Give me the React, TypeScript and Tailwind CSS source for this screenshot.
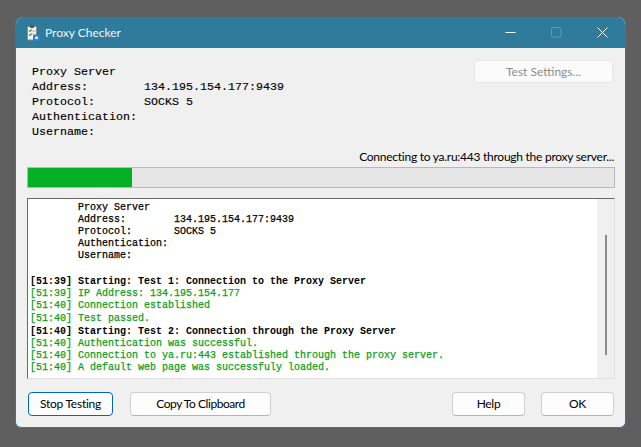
const mono = "font-['Liberation_Mono',monospace]";

function ClipIcon() {
  return (
    <svg width="13" height="16" viewBox="0 0 13 16" className="mr-[5px] shrink-0">
      <rect x="0.5" y="1.5" width="9" height="13.5" rx="1" fill="#f4f4f0" stroke="#8d8d85" strokeWidth="1" />
      <rect x="3" y="0" width="4" height="3" fill="#55554f" />
      <path d="M2 5.5l1 1 2-2M2 9.5l1 1 2-2" stroke="#3aa845" strokeWidth="1.1" fill="none" />
      <path d="M5.5 6h3M5.5 9h2" stroke="#a5a5a5" strokeWidth="1" />
      <rect x="6" y="9.5" width="7" height="6.5" rx="1.5" fill="#2f7fd0" />
      <circle cx="9.5" cy="12.7" r="1.5" fill="#e8f2fc" />
    </svg>
  );
}

function Btn({ label, w, primary, track }: { label: string; w: string; primary?: boolean; track: string }) {
  return (
    <button
      className={`${w} ${track} h-[24px] rounded-[4px] border bg-[#fdfdfd] text-[12px] text-black ${
        primary ? "border-[#0067c0]" : "border-[#d0d0d0] border-b-[#b5b5b5]"
      }`}
    >
      {label}
    </button>
  );
}

const summary = [
  ["Proxy Server", ""],
  ["Address:", "134.195.154.177:9439"],
  ["Protocol:", "SOCKS 5"],
  ["Authentication:", ""],
  ["Username:", ""],
];

const green = "text-[#0aa01c] [-webkit-text-stroke:0.25px]";
const black = "text-black font-bold";

type Line = { t: string; text: string; c: string; h: string };
const log: Line[] = [
  { t: "[51:39]", text: "Starting: Test 1: Connection to the Proxy Server", c: black, h: "h-[12px]" },
  { t: "[51:39]", text: "IP Address: 134.195.154.177", c: green, h: "h-[12px]" },
  { t: "[51:40]", text: "Connection established", c: green, h: "h-[13px]" },
  { t: "[51:40]", text: "Test passed.", c: green, h: "h-[13px]" },
  { t: "[51:40]", text: "Starting: Test 2: Connection through the Proxy Server", c: black, h: "h-[12px]" },
  { t: "[51:40]", text: "Authentication was successful.", c: green, h: "h-[12px]" },
  { t: "[51:40]", text: "Connection to ya.ru:443 established through the proxy server.", c: green, h: "h-[12px]" },
  { t: "[51:40]", text: "A default web page was successfuly loaded.", c: green, h: "h-[12px]" },
];

export default function App() {
  return (
    <div className="h-[447px] w-[641px] overflow-hidden bg-[#5f5f5f] pl-[15px] pt-[17px] font-['Lato',sans-serif]">
      <div className="flex h-[411px] w-[611px] flex-col overflow-hidden rounded-t-[8px] rounded-b-[6px] border-x border-b border-[#2e7b9b] bg-[#f0f0f0]">
        <div className="flex h-[31px] shrink-0 items-center bg-[#2e7b9b] pl-[11px] text-white">
          <ClipIcon />
          <span className="text-[12px] text-[#eef5f8]">Proxy Checker</span>
          <div className="ml-auto flex items-center pr-[17px]">
            <svg width="11" height="11" viewBox="0 0 11 11" className="mr-[35px]">
              <path d="M0.5 5.5h10" stroke="#fff" strokeWidth="1" />
            </svg>
            <svg width="11" height="11" viewBox="0 0 11 11" className="mr-[35px]">
              <rect x="0.5" y="0.5" width="9.5" height="9.5" rx="1" fill="none" stroke="#5c9ab3" strokeWidth="1" />
            </svg>
            <svg width="11" height="11" viewBox="0 0 11 11">
              <path d="M0.5 0.5l10 10M10.5 0.5l-10 10" stroke="#fff" strokeWidth="1" />
            </svg>
          </div>
        </div>

        <div className="flex h-[119px] shrink-0 flex-col pl-[11px] pr-[10px]">
          <div className="flex items-start justify-between pl-[5px] pr-[2px] pt-[12px]">
            <div className={`${mono} pt-[5px] text-[11.67px] text-black [-webkit-text-stroke:0.15px]`}>
              {summary.map(([a, b]) => (
                <div key={a} className="flex h-[15px] items-center whitespace-pre">
                  <span className="w-[112px]">{a}</span>
                  <span>{b}</span>
                </div>
              ))}
            </div>
            <div className="flex h-[23px] w-[139px] items-center justify-center rounded-[4px] border border-[#e6e6e6] bg-[#fbfbfb] text-[12px] text-[#8d8d8d]">
              Test Settings...
            </div>
          </div>
          <div className="mt-auto pb-[2px] pr-px text-right text-[12px] leading-[16px] tracking-[-0.26px] text-black">
            Connecting to ya.ru:443 through the proxy server...
          </div>
        </div>

        <div className="ml-[11px] h-[21px] w-[588px] shrink-0 border border-[#b8b8b8] bg-[#e6e6e6]">
          <div className="h-full w-[104px] bg-[#06b025]" />
        </div>

        <div className="ml-[11px] mt-[10px] flex h-[181px] w-[588px] shrink-0 border border-[#dfdfdf] border-l-[#696969] border-t-[#696969] bg-white">
          <div className={`${mono} min-w-0 flex-1 overflow-hidden pl-[2px] pt-[2px] text-[10px] whitespace-pre`}>
            <div className="pl-[48px] text-black [-webkit-text-stroke:0.25px]">
              {summary.map(([a, b]) => (
                <div key={a} className="flex h-[12px] items-center">
                  <span className="w-[96px]">{a}</span>
                  <span>{b}</span>
                </div>
              ))}
            </div>
            <div className="h-[14px]" />
            {log.map((l, i) => (
              <div key={i} className={`flex items-center ${l.h} ${l.c}`}>
                <span className="w-[48px]">{l.t}</span>
                <span>{l.text}</span>
              </div>
            ))}
          </div>
          <div className="flex w-[17px] shrink-0 justify-center bg-[#f0f0f0] pt-[36px]">
            <div className="h-[120px] w-[2px] bg-[#8a8a8a]" />
          </div>
        </div>

        <div className="flex flex-1 items-start pl-[12px] pr-[11px] pt-[13px]">
          <Btn label="Stop Testing" w="w-[85px]" track="tracking-[-0.25px]" primary />
          <div className="w-[17px]" />
          <Btn label="Copy To Clipboard" w="w-[141px]" track="tracking-[-0.45px]" />
          <div className="ml-auto" />
          <Btn label="Help" w="w-[73px]" track="tracking-[-0.3px]" />
          <div className="w-[16px]" />
          <Btn label="OK" w="w-[73px]" track="tracking-[-0.3px]" />
        </div>
      </div>
    </div>
  );
}
